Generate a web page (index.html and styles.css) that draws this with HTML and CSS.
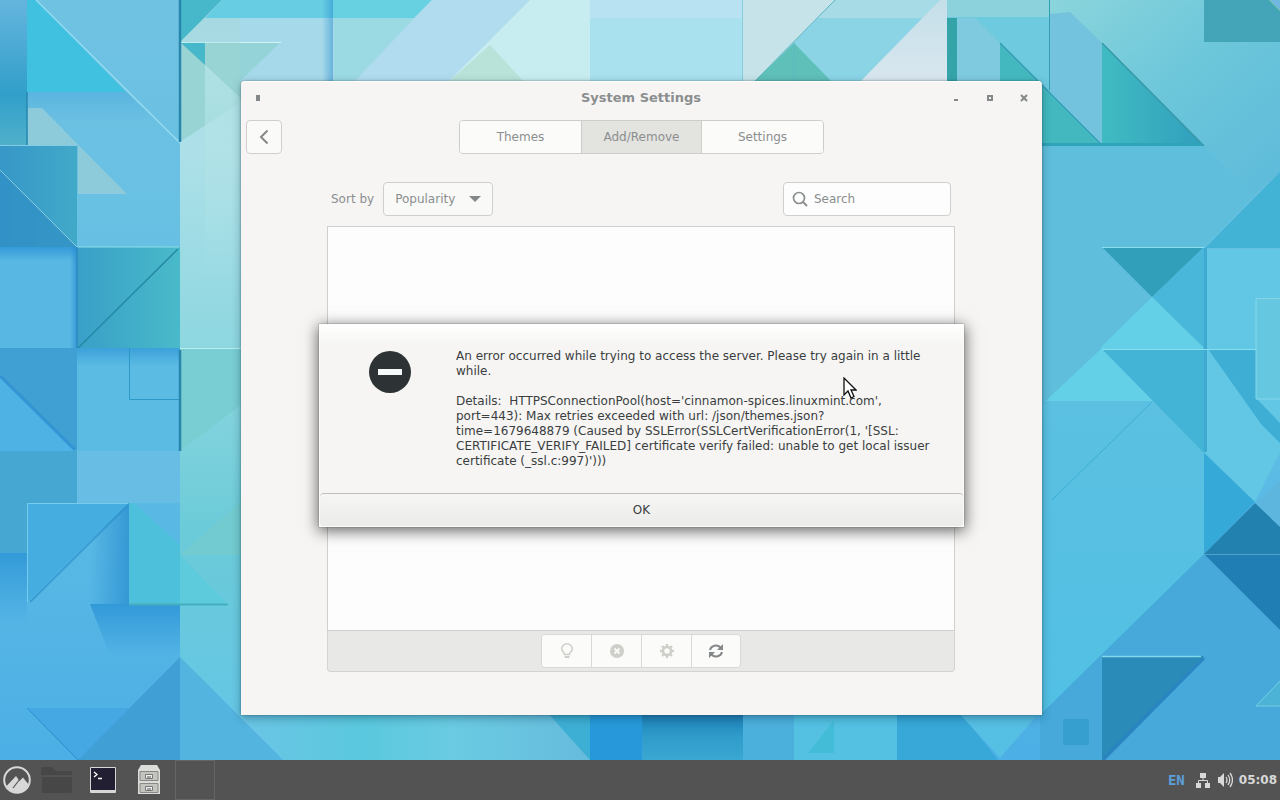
FILE: index.html
```html
<!DOCTYPE html>
<html lang="en">
<head>
<meta charset="utf-8">
<title>System Settings</title>
<link rel="stylesheet" href="styles.css">
</head>
<body>
<main class="desktop">
  <svg class="wallpaper" viewBox="0 0 1280 760" preserveAspectRatio="none" aria-hidden="true">
    <defs>
      <linearGradient id="base" x1="0" y1="0" x2="0" y2="1"><stop offset="0" stop-color="#70c2e2"/><stop offset=".5" stop-color="#62bfe4"/><stop offset="1" stop-color="#4cafe5"/></linearGradient>
      <linearGradient id="edge" x1="0" y1="0" x2="0" y2="1"><stop offset="0" stop-color="#65b5de"/><stop offset=".65" stop-color="#319fca"/><stop offset="1" stop-color="#50b0ca"/></linearGradient>
      <linearGradient id="strip" x1="0" y1="0" x2="0" y2="1"><stop offset="0" stop-color="#a5d8e0"/><stop offset=".2" stop-color="#ade0e8"/><stop offset=".5" stop-color="#88d5df"/><stop offset=".7" stop-color="#6bcbd8"/><stop offset="1" stop-color="#64c5e8"/></linearGradient>
      <linearGradient id="glow" x1="0" y1="0" x2="0" y2="1"><stop offset="0" stop-color="#b3e4e6" stop-opacity=".8"/><stop offset="1" stop-color="#b3e4e6" stop-opacity="0"/></linearGradient>
      <linearGradient id="slate" x1="0" y1="0" x2="1" y2="0"><stop offset="0" stop-color="#3797c8"/><stop offset="1" stop-color="#41a9c8"/></linearGradient>
      <linearGradient id="teal" x1="0" y1="0" x2="1" y2="0"><stop offset="0" stop-color="#399fc8"/><stop offset="1" stop-color="#49bac9"/></linearGradient>
      <linearGradient id="tealr" x1="0" y1="0" x2="1" y2="0"><stop offset="0" stop-color="#40bbc2"/><stop offset="1" stop-color="#319fbd"/></linearGradient>
      <linearGradient id="right" x1="0" y1="0" x2="1" y2="1"><stop offset="0" stop-color="#8bd5dc"/><stop offset=".5" stop-color="#6bc6da"/><stop offset="1" stop-color="#5dbada"/></linearGradient>
      <linearGradient id="mid" x1="0" y1="0" x2="0" y2="1"><stop offset="0" stop-color="#63c0de"/><stop offset="1" stop-color="#50c0e5"/></linearGradient>
      <linearGradient id="shade" x1="0" y1="0" x2="0" y2="1"><stop offset="0" stop-color="#2790d5" stop-opacity=".75"/><stop offset="1" stop-color="#2790d5" stop-opacity="0"/></linearGradient>
      <linearGradient id="shadeleft" x1="1" y1="0" x2="0" y2="0"><stop offset="0" stop-color="#268bcd" stop-opacity=".7"/><stop offset="1" stop-color="#268bcd" stop-opacity="0"/></linearGradient>
      <linearGradient id="bottom" x1="0" y1="0" x2="1" y2="0"><stop offset="0" stop-color="#6bc5e5"/><stop offset=".35" stop-color="#5ac8de"/><stop offset=".6" stop-color="#6acbe2"/><stop offset="1" stop-color="#66bbdd"/></linearGradient>
      <linearGradient id="deep" x1="0" y1="0" x2="0" y2="1"><stop offset="0" stop-color="#1c7cb4"/><stop offset=".5" stop-color="#2e9bca"/><stop offset="1" stop-color="#3aa8d2"/></linearGradient>
      <linearGradient id="pale" x1="0" y1="0" x2="0" y2="1"><stop offset="0" stop-color="#c4dfe9"/><stop offset="1" stop-color="#d9e7ef"/></linearGradient>
    </defs>
    <path fill="url(#base)" d="M0 0h1280v760H0z"/>
    <path fill="url(#edge)" d="M0 0h27v145H0z"/>
    <path fill="#40c1e0" d="M27 0h9l90 92H27z"/>
    <path fill="url(#shade)" opacity=".35" d="M27 92h99l30 30H27z"/>
    <path stroke="#2788af" stroke-width="1.5" d="M27 92v53"/>
    <path stroke="#93dcf0" stroke-width="1.5" d="M36 0l144 143"/>
    <path fill="#8dcada" d="M28 108h14l85 86H78v-49H28z"/>
    <path fill="url(#slate)" d="M0 145h77v102z"/>
    <path fill="url(#slate)" d="M0 145h77v102H0z"/>
    <path fill="#318fc4" opacity=".7" d="M0 170l77 77H0z"/>
    <path stroke="#83cce2" d="M0 145.500h77M0 170l77 77"/>
    <path fill="#58b7e3" d="M0 247h77v101H0z"/>
    <path fill="url(#shade)" d="M0 247h77v14H0z"/>
    <path fill="url(#shadeleft)" d="M70 247h7v101h-7z"/>
    <path fill="url(#teal)" d="M77 247h103v101H77z"/>
    <path stroke="#2589a5" stroke-width="1.500" d="M178 249L78 348"/>
    <path stroke="#8ce0e9" d="M77 247h102"/>
    <path stroke="#2980ba" d="M77 247v101"/>
    <path fill="#409fd3" d="M0 348h77v103L0 375z"/>
    <path fill="#4eb3e4" d="M0 375l77 76H0z"/>
    <path stroke="#2889cf" stroke-width="3" opacity=".7" d="M0 376l75 74"/>
    <path fill="#5bbbe3" d="M77 348h103v103H77z"/>
    <path fill="url(#shade)" opacity=".8" d="M77 348h103v18H77z"/>
    <path fill="none" stroke="#2b98c6" d="M180 399.500h-50.500V348"/>
    <path fill="#46a8d2" d="M0 451h77v52H27v50H0z"/>
    <path fill="#67bde3" d="M77 451h103v52H77z"/>
    <path fill="url(#shade)" d="M0 553h27v70H0z"/>
    <path fill="url(#shadeleft)" d="M90 540l39-37v101H90z"/>
    <path fill="url(#shade)" d="M90 604h90v52H110z"/>
    <path fill="#46ade0" d="M27 503h102L27 602z"/>
    <path fill="none" stroke="#77cced" d="M27.500 602V503.500H128"/>
    <path stroke="#2b90cb" stroke-width="2" opacity=".65" d="M129 504L30 602"/>
    <path fill="#4dc0dc" d="M129 503h5l46 42v59h-51z"/>
    <path fill="#45a8e3" d="M27 708h102l-51 52z"/>
    <path stroke="#2790cd" d="M27 708l51 52"/>
    <path fill="url(#strip)" d="M180 0h65v760h-65z"/>
    <path fill="#99d4d5" d="M180 42h65v57l-65 43z"/>
    <path fill="url(#glow)" d="M205 65l40 37v180h-40z"/>
    <path fill="#47b8c9" d="M180 0h42l-42 42zm0 42h25v23z"/>
    <path fill="#79ced3" d="M180 348h65v54l-65 49z"/>
    <path fill="#72cbd0" d="M245 498v57h-65z"/>
    <path fill="#5dcbdc" d="M180 555l48 49h-48z"/>
    <path stroke="#44aebf" stroke-width="2" d="M129 604.500h99"/>
    <path stroke="#bceeee" d="M180 348.500h65M180 42.500h65"/>
    <path stroke="#2886ad" stroke-width="2.500" d="M180 0v142M180 350v101"/>
    <path fill="#409fd4" d="M180 657v103H78z"/>
    <path fill="#53b4e0" d="M180 657l103 103H180z"/>

    <path fill="#a6d9e9" d="M222 0h308v82H240V18h-35z"/>
    <path fill="#66cde2" d="M222 0h112v18H205z"/>
    <path fill="#68d1e1" d="M334 0h98l-18 18h-80z"/>
    <path fill="#94d4d8" d="M240 42h41l-41 39z"/>
    <path fill="#9bd9e3" d="M334 18h80l-60 64h-20z"/>
    <path fill="url(#shadeleft)" opacity=".7" d="M322 0h11v81h-11z"/>
    <path stroke="#d4f3f4" d="M240 42.500h41"/>
    <path fill="#b1dcef" d="M432 0h98l-82 82h-94z"/>
    <path fill="#c7edf0" d="M530 0h61v82H448z"/>
    <path fill="#b9e2d8" d="M490 45l34 37h-76z"/>
    <path fill="#a9e1ee" d="M590 0h153v82H590z"/>
    <path fill="#bbe1f1" opacity=".8" d="M590 0h153v18H590z"/>
    <path stroke="#88cde0" d="M742.500 0v81"/>
    <path fill="#c5e3e9" d="M743 0h93l-82 82h-11z"/>
    <path fill="#8bd4e6" d="M836 0h104l-78 82H754z"/>
    <path fill="#a7dbe6" d="M836 0h104l-17 18H817z"/>
    <path fill="#5fbfb9" d="M794 43l38 39h-78z"/>
    <path stroke="#5cb9c0" d="M755 81l80-81M794 43v39"/>
    <path fill="url(#pale)" d="M947 0v82h-87l80-82z"/>
    <path fill="#6dcadf" d="M947 0h103v180H947z"/>
    <path fill="#35a4a9" d="M947 18h10v64h-10z"/>
    <path fill="#7fcadf" d="M957 18h18l25 25v39h-43z"/>
    <path fill="#43b9bf" d="M1000 43l102 102H1000z"/>
    <path stroke="#349cb3" stroke-width="1.500" d="M1000 43l102 102"/>
    <path fill="#8bd2dc" d="M947 0h105v17H947z"/>

    <path fill="url(#right)" d="M1050 0h230v172l-26 24-52-50-150-130z"/>
    <path fill="#73c3df" d="M1050 14l20-2 32 31v101l-52-52z"/>
    <path stroke="#349fb3" d="M1049.500 0v90"/>
    <path fill="url(#tealr)" d="M1102 43l102 103h-102z"/>
    <path stroke="#3698a9" stroke-width="1.500" d="M1102 43l102 103"/>
    <path stroke="#2fa3b8" stroke-width="3" d="M1040 144.500h162"/>
    <path fill="#44a5b8" d="M1204 0h76v42h-76z"/>
    <path fill="#70b8e0" stroke="#68c48c" d="M1268-1l13 13V-1z"/>
    <path fill="url(#mid)" d="M1040 146h164l50 50-50 52v512h-164z"/>
    <path fill="#5fbedc" d="M1040 146h164l50 50-152 152-62 58z"/>
    <path fill="#42b2d5" d="M1280 172v76h-75z"/>
    <path fill="#62c7e4" d="M1204 249h76v203l-25 50-51-50z"/>
    <path stroke="#3fa9cf" stroke-width="4" d="M1205 248v204"/>
    <path fill="#319fb9" d="M1102 247h102l-52 50z"/>
    <path fill="#48b7da" d="M1204 247v101l-52-51z"/>
    <path fill="#64d0e8" d="M1152 297l52 51-52 53h-112v-4z"/>
    <path fill="#5fbedc" d="M1152 297l-52 51H1040v-51z"/>
    <path fill="#5fbedc" d="M1102 348l-62 58v-60z"/>
    <path fill="#43b3d6" d="M1102 349h102v104z"/>
    <path fill="#3faed4" d="M1208 349h48v49l24 25v20l-19-19z"/>
    <path fill="#65c8e0" d="M1256 298h24v101h-24z"/>
    <path fill="none" stroke="#85d5e9" d="M1280 298.500h-24V399H1280"/>
    <path stroke="#88dfee" d="M1102 247.500h102M1102 349.500h154"/>
    <path stroke="#3bafd3" d="M1152 402l-100 98"/>
    <path fill="#35a9d7" d="M1204 453l51 49-51 52z"/>
    <path fill="#5cb6dd" d="M1280 480v50l-24-27z"/>
    <path fill="#2381b0" d="M1255 503l25 24v27h-76z"/>
    <path fill="#46a9d9" d="M1204 554l76 76v130h-240v-45z"/>
    <path fill="#207eb4" d="M1204 554h76v76z"/>
    <path stroke="#51a2c8" d="M1204 554.500h76"/>
    <path fill="#2b8bb8" d="M1102 656h102l-102 104z"/>
    <path stroke="#2279bb" stroke-width="3" opacity=".75" d="M1204 658l-101 102"/>
    <path stroke="#82d7e9" stroke-width="1.500" d="M1102 656.500h99"/>
    <path fill="#369fd0" d="M1063 719h26v26h-26z"/>
    <path fill="#4cb3d7" stroke="#77cfe1" d="M1281 680l-25 26h25"/>

    <path fill="url(#bottom)" d="M240 712h310l42 48H283l-43-43z"/>
    <path fill="#3dafd4" d="M547 712h43v48z"/>
    <path fill="#2799da" d="M590 712h52v48h-52z"/>
    <path fill="url(#deep)" d="M642 712h101v48H642z"/>
    <path fill="#4cb0dd" d="M743 712h51v48h-51z"/>
    <path fill="#54c1e3" d="M794 712h103v48H794z"/>
    <path fill="#43bcd7" d="M834 720v33h-26z"/>
    <path fill="#37a8d8" d="M897 712h63l38 48H897z"/>
    <path fill="#56bfe4" d="M958 712h82l-40 46z"/>
  </svg>

  <section class="window" aria-labelledby="window-title">
    <header class="titlebar">
      <button class="caption caption-menu" aria-label="Window menu"><svg width="14" height="14"><path d="M5 4h4v6H5z" fill="#858889"/></svg></button>
      <h1 class="title" id="window-title">System Settings</h1>
      <div class="captions">
        <button class="caption" aria-label="Minimize"><svg width="14" height="14"><path d="M5 8h4v2H5z" fill="#858889"/></svg></button>
        <button class="caption" aria-label="Maximize"><svg width="14" height="14"><path d="M5 5h4v4H5z" fill="none" stroke="#858889" stroke-width="2"/></svg></button>
        <button class="caption" aria-label="Close"><svg width="14" height="14"><path d="M4 4l6 6M10 4l-6 6" stroke="#858889" stroke-width="2"/></svg></button>
      </div>
    </header>
    <nav class="toolbar" aria-label="Pages">
      <button class="back" aria-label="Back"><svg width="16" height="16"><path d="M11.500 1.500L5 8l6.500 6.500" fill="none" stroke="#858889" stroke-width="2"/></svg></button>
      <div class="tabs">
        <button class="tab">Themes</button>
        <button class="tab tab-active">Add/Remove</button>
        <button class="tab">Settings</button>
      </div>
    </nav>
    <div class="page">
      <div class="filters">
        <div class="sort">
          <label for="sort">Sort by</label>
          <div class="select-wrap">
            <select class="select" id="sort"><option>Popularity</option></select>
            <svg class="select-arrow" width="12" height="6"><path d="M0 0h12L6 6z" fill="#858889"/></svg>
          </div>
        </div>
        <label class="search">
          <svg width="16" height="16" fill="none" stroke="#8b8e8f"><circle cx="7" cy="7" r="5.500" stroke-width="1.700"/><path d="M11 11l4 4" stroke-width="2"/></svg>
          <input class="search-input" type="text" placeholder="Search" aria-label="Search">
        </label>
      </div>
      <div class="list"></div>
      <footer class="actions">
        <div class="action-group">
          <button class="action" aria-label="More info"><svg width="16" height="16" fill="none" stroke="#cfcfca"><path d="M5.500 11.500C5.500 9 2.700 8.500 2.700 5.800a5.300 5 0 0 1 10.600 0C13.300 8.500 10.500 9 10.500 11.500z" stroke-width="1.600"/><path d="M5.500 14h5" stroke-width="2"/></svg></button>
          <button class="action" aria-label="Uninstall"><svg width="16" height="16"><circle cx="8" cy="8" r="7" fill="#cfcfca"/><path d="M5.500 5.500l5 5M10.500 5.500l-5 5" stroke="#fafaf8" stroke-width="2"/></svg></button>
          <button class="action" aria-label="Configure"><svg width="16" height="16"><circle cx="8" cy="8" r="4" fill="none" stroke="#cfcfca" stroke-width="2.600"/><path d="M8 1v3M8 12v3M1 8h3M12 8h3M3 3l2 2M11 11l2 2M13 3l-2 2M5 11l-2 2" stroke="#cfcfca" stroke-width="2.400"/></svg></button>
          <button class="action" aria-label="Refresh"><svg width="16" height="16" fill="none" stroke="#858889" stroke-width="2"><path d="M2 7a6 5.500 0 0 1 10.500-2.500M14 9a6 5.500 0 0 1-10.500 2.500"/><path d="M15 1v6H9l2.500-2.500zM1 15V9h6l-2.500 2.500z" fill="#858889" stroke="none"/></svg></button>
        </div>
      </footer>
    </div>
  </section>

  <section class="dialog" role="alertdialog" aria-label="Error" aria-describedby="message">
    <div class="dialog-body">
      <svg class="error-icon" width="42" height="42"><circle cx="21" cy="21" r="21" fill="#2d3335"/><path d="M9 18h24v6H9z" fill="#f5f9fa"/></svg>
      <div class="message" id="message">
        <p>An error occurred while trying to access the server. Please try again in a little<br>while.</p>
        <p>Details:&nbsp; HTTPSConnectionPool(host='cinnamon-spices.linuxmint.com',<br>port=443): Max retries exceeded with url: /json/themes.json?<br>time=1679648879 (Caused by SSLError(SSLCertVerificationError(1, '[SSL:<br>CERTIFICATE_VERIFY_FAILED] certificate verify failed: unable to get local issuer<br>certificate (_ssl.c:997)')))</p>
      </div>
    </div>
    <button class="ok">OK</button>
  </section>
  <svg class="pointer" width="14" height="22" aria-hidden="true"><path d="M1 1v17l4-4 3 7 3-1.500-3-6.500h5z" fill="#fff" stroke="#111" stroke-width="1.300"/></svg>
</main>

<footer class="taskbar">
  <div class="launchers">
    <button class="launcher" aria-label="Menu"><svg width="28" height="28"><circle cx="14" cy="14" r="12.800" fill="none" stroke="#d8d8d8" stroke-width="2"/><path d="M3.500 20L13 10l3.500 5L20 11.500l6 7.500A12.500 12.500 0 0 1 3.500 20z" fill="#d8d8d8"/><path d="M10 22l7-9" stroke="#555" stroke-width="1.200"/></svg></button>
    <button class="launcher launcher-folder" aria-label="Files"><svg width="34" height="28"><path d="M1 3q0-2 2-2h9l4 4h15q1 0 1 2v2H1zM2 11h30v14q0 2-2 2H4q-2 0-2-2z" fill="#474747"/></svg></button>
    <button class="launcher" aria-label="Terminal"><svg width="28" height="28"><rect x="1" y="1" width="26" height="26" rx="1" fill="#d7d7d7"/><path d="M2 2h24v22H2z" fill="#231f32"/><path d="M5 6l3 2.500L5 11M9 12.500h4" fill="none" stroke="#fff" stroke-width="1.300"/></svg></button>
    <button class="launcher launcher-cabinet" aria-label="File manager"><svg width="24" height="32"><path d="M4 1h16l3 5v24H1V6z" fill="#dcdcd8"/><path d="M3 7.500h18v9H3zM3 19.500h18v9H3z" fill="#c4c4bf" stroke="#888"/><path d="M8.500 10.500h7v4h-7zM8.500 22.500h7v4h-7z" fill="#eee" stroke="#777"/><path d="M10 13h4M10 25h4" stroke="#555"/></svg></button>
    <div class="window-slot"></div>
  </div>
  <div class="tray">
    <span class="layout">EN</span>
    <svg width="16" height="16"><path d="M5 1h6v5H5zM1 11h5v5H1zM10 11h5v5h-5z" fill="#d8d8d8"/><path d="M8 6v3M3.500 12V8.500h9V12" fill="none" stroke="#d8d8d8"/></svg>
    <svg width="16" height="16"><path d="M1 5h2l4-4v14l-4-4H1z" fill="#d8d8d8"/><path d="M9 5q2 3 0 6M11 3q3.500 5 0 10M13 1q5 7 0 14" fill="none" stroke="#d8d8d8" stroke-width="1.300"/></svg>
    <time class="clock" datetime="05:08">05:08</time>
  </div>
</footer>
</body>
</html>
```
FILE: styles.css
```css
* {
  box-sizing: border-box;
}

body {
  margin: 0;
  min-height: 100vh;
  display: flex;
  flex-direction: column;
  font: 12px/15px "DejaVu Sans", sans-serif;
  color: #8b8e8f;
  overflow: hidden;
}

button, input, select {
  font: inherit;
  color: inherit;
  margin: 0;
}

button {
  padding: 0;
}

svg {
  display: block;
}

.desktop {
  position: relative;
  flex: 1;
}

.wallpaper {
  position: absolute;
  width: 100%;
  height: 100%;
}

.window {
  position: absolute;
  top: 81px;
  right: 238px;
  bottom: 45px;
  left: 241px;
  display: flex;
  flex-direction: column;
  background: #f6f5f4;
  border-radius: 4px 4px 0 0;
  box-shadow: inset 0 1px #fff, 0 0 2px rgba(40, 60, 70, .6), 0 3px 10px rgba(0, 40, 60, .35);
}

.titlebar {
  display: grid;
  grid-template-columns: 1fr auto 1fr;
  align-items: center;
  padding: 0 11px 0 10px;
  height: 33px;
}

.title {
  margin: 0;
  font-size: 13px;
  line-height: 16px;
}

.caption {
  width: 14px;
  height: 14px;
  border: 0;
  background: none;
}

.captions {
  display: flex;
  justify-content: flex-end;
  gap: 20px;
}

.toolbar {
  display: grid;
  grid-template-columns: 1fr auto 1fr;
  padding: 6px 5px;
}

.back {
  display: grid;
  place-items: center;
  width: 36px;
  height: 34px;
  border: 1px solid #cfcfcc;
  border-radius: 4px;
  background: #fafaf9;
}

.tabs {
  display: flex;
  border: 1px solid #cdcdca;
  border-radius: 4px;
  overflow: hidden;
}

.tab {
  width: 121px;
  height: 32px;
  border: 0;
  background: #fbfbfa;
}

.tab-active {
  border: solid #cdcdca;
  border-width: 0 1px;
  background: #e3e4e0;
}

.page {
  flex: 1;
  display: flex;
  flex-direction: column;
  padding: 22px 87px 43px 86px;
}

.filters {
  display: flex;
  justify-content: space-between;
  padding: 0 4px 10px;
}

.sort {
  display: flex;
  align-items: center;
  gap: 9px;
}

.select-wrap {
  position: relative;
}

.select {
  appearance: none;
  width: 110px;
  height: 34px;
  padding: 0 11px;
  border: 1px solid #cfcfcc;
  border-radius: 4px;
  background: #f9f9f8;
}

.select-arrow {
  position: absolute;
  top: 14px;
  right: 12px;
}

.search {
  display: flex;
  align-items: center;
  gap: 6px;
  width: 168px;
  height: 34px;
  padding: 0 8px;
  border: 1px solid #cfcfcc;
  border-radius: 4px;
  background: #fdfdfd;
}

.search-input {
  min-width: 0;
  flex: 1;
  padding: 0;
  border: 0;
  outline: 0;
  background: none;
}

.search-input::placeholder {
  color: #8b8e8f;
  opacity: 1;
}

.list {
  flex: 1;
  border: 1px solid #cfcfcd;
  background: #fdfdfd;
}

.actions {
  display: flex;
  justify-content: center;
  padding: 3px;
  border: solid #d3d3d1;
  border-width: 0 1px 1px;
  border-radius: 0 0 4px 4px;
  background: #e8e8e7;
}

.action-group {
  display: flex;
  border: 1px solid #d8d8d5;
  border-radius: 4px;
  overflow: hidden;
}

.action {
  display: grid;
  place-items: center;
  width: 50px;
  height: 32px;
  border: 0;
  border-right: 1px solid #d8d8d5;
  background: #fbfbf9;
}

.action:last-child {
  width: 48px;
  border-right: 0;
}

.dialog {
  position: absolute;
  top: 324px;
  right: 316px;
  left: 319px;
  display: flex;
  flex-direction: column;
  border: 1px solid #fcfcfb;
  background: linear-gradient(#fff, #f6f5f4 20px);
  box-shadow: 0 0 1px rgba(70, 70, 70, .9), 0 3px 14px 1px rgba(0, 0, 0, .6);
  color: #3a3e40;
}

.dialog-body {
  display: flex;
  align-items: flex-start;
  gap: 45px;
  padding: 24px 30px 24px 49px;
}

.error-icon {
  flex: none;
  margin-top: 2px;
}

.message p {
  margin: 0 0 15px;
  white-space: nowrap;
}

.message p:last-child {
  margin: 0;
}

.ok {
  height: 33px;
  border: 0;
  border-top: 1px solid #bfbfbc;
  border-radius: 4px;
  background: linear-gradient(#f6f6f5, #ebebe9);
}

.pointer {
  position: absolute;
  top: 377px;
  left: 843px;
}

.taskbar {
  display: flex;
  justify-content: space-between;
  align-items: center;
  height: 40px;
  padding: 0 3px;
  background: #535353;
  color: #d8d8d8;
}

.launchers, .tray {
  display: flex;
  align-items: center;
}

.launcher {
  border: 0;
  background: none;
}

.launcher-folder {
  margin: 0 15px 0 9px;
}

.launcher-cabinet {
  margin: 0 14px 0 20px;
}

.window-slot {
  width: 40px;
  height: 40px;
  border: 1px solid #666;
}

.tray {
  gap: 6px;
}

.layout {
  margin-right: 4px;
  font: bold 14px/16px "DejaVu Sans Mono", monospace;
  color: #5c9fd8;
}

.clock {
  font-weight: bold;
}
```
